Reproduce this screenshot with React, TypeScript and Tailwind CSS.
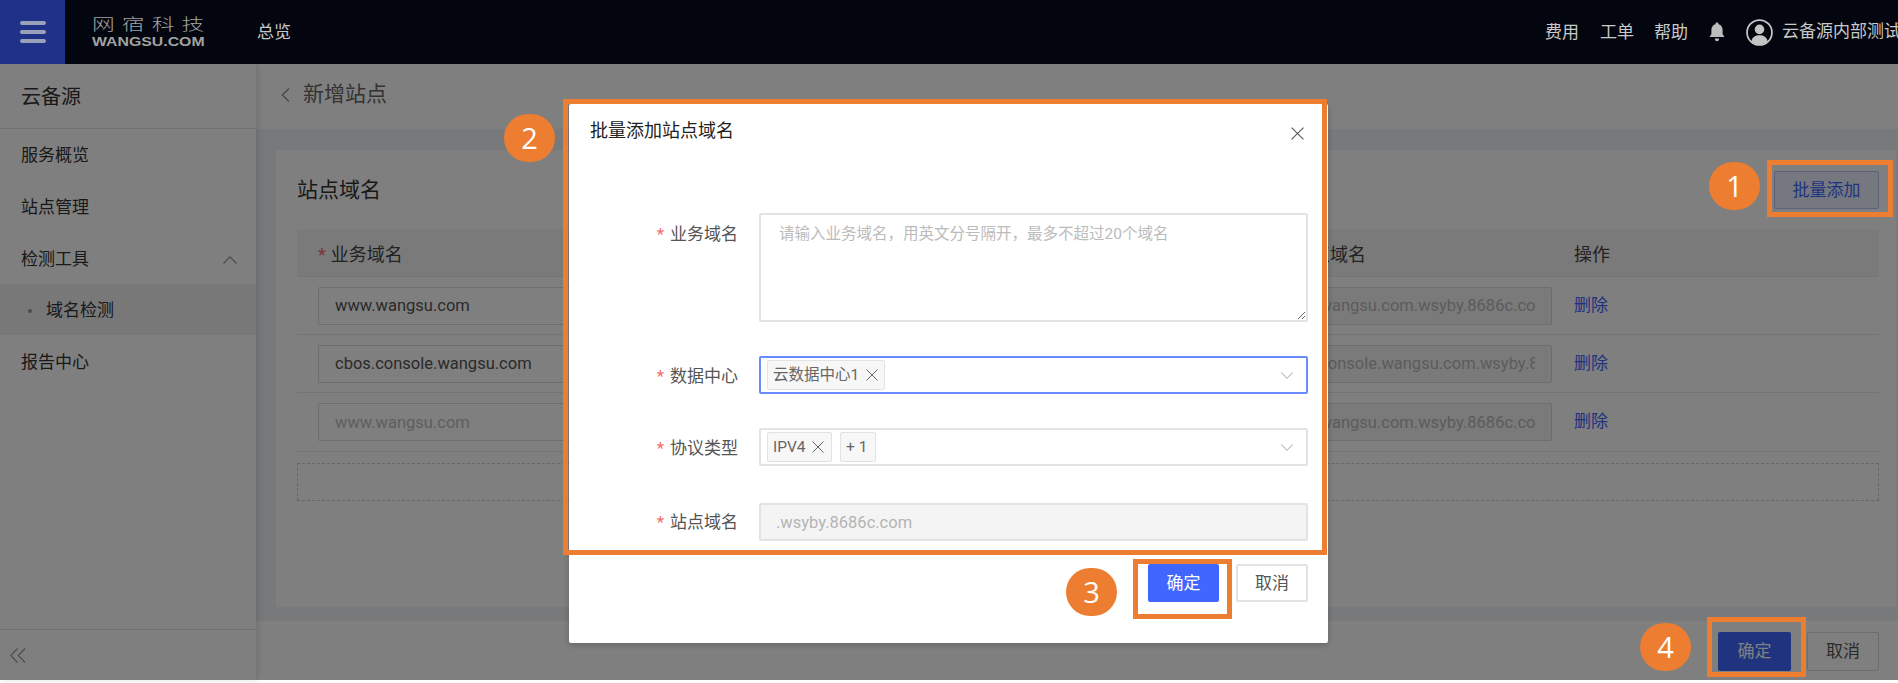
import React from "react";

const cjk = { fontFamily: 'Roboto, "Noto Sans CJK SC", sans-serif' };

function Chevron({ className }: { className: string }) {
  return (
    <svg viewBox="0 0 14 8" className={className} fill="none" stroke="currentColor" strokeWidth="1.2">
      <path d="M0.5 0.5 L7 7.2 L13.5 0.5" />
    </svg>
  );
}

function CloseX({ className }: { className: string }) {
  return (
    <svg viewBox="0 0 12 12" className={className} fill="none" stroke="currentColor" strokeWidth="1">
      <path d="M0.5 0.5 L11.5 11.5 M11.5 0.5 L0.5 11.5" />
    </svg>
  );
}

function Badge({ n, className }: { n: string; className: string }) {
  return (
    <div
      className={`absolute z-30 flex h-[48px] w-[51px] items-center justify-center rounded-full bg-[#ed7d31] text-[29px] text-white ${className}`}
      style={{ fontFamily: '"Open Sans", sans-serif' }}
    >
      {n}
    </div>
  );
}

function Frame({ className }: { className: string }) {
  return <div className={`pointer-events-none absolute z-30 border-[5px] border-[#ed7d31] ${className}`} />;
}

function Row({ value, site, placeholder, last }: { value: string; site: string; placeholder?: boolean; last?: boolean }) {
  const input =
    "h-[38px] w-full rounded-[2px] border border-[#d9d9d9] px-[16px] text-[16.5px] outline-none";
  return (
    <div className={`grid grid-cols-[472px_472px_312px_1fr] items-center border-b border-[#e8e8e8] ${last ? "h-[59px]" : "h-[58px]"}`}>
      <div className="pl-[21px]">
        <input readOnly value={value} className={`${input} ${placeholder ? "text-[#bdbdbd]" : "text-[#555]"}`} style={cjk} />
      </div>
      <div />
      <div className="pl-[21px] pr-[1px]">
        <input readOnly value={site} className={`${input} bg-[#f5f5f5] text-[#b8b8b8]`} style={cjk} />
      </div>
      <div className="pl-[21px] text-[17px] text-[#4066ff]">删除</div>
    </div>
  );
}

function FormRow({ label, children, top, shift }: { label: string; children: React.ReactNode; top?: boolean; shift?: string }) {
  return (
    <div className={`flex ${top ? "items-start" : "items-center"}`}>
      <div className={`flex w-[190px] justify-end pr-[21px] text-[17px] text-[#555] ${top ? "pt-[9px]" : shift ?? ""}`}>
        <span className="mr-[6px] text-[#f56c6c]">*</span>
        {label}
      </div>
      {children}
    </div>
  );
}

function Tag({ children, className }: { children: React.ReactNode; className: string }) {
  return (
    <div className={`flex h-[30px] items-center rounded-[2px] border border-[#e3e3e3] bg-[#f7f7f7] pl-[5px] pt-[2px] text-[15.5px] text-[#666] ${className}`}>
      {children}
    </div>
  );
}

export default function App() {
  return (
    <div className="relative h-[683px] w-[1898px] overflow-hidden bg-white" style={cjk}>
      {/* top bar */}
      <header className="relative z-20 flex h-[64px] items-center bg-[#03060f] text-[17px] text-[#c9c9c9]">
        <div className="flex h-full w-[65px] shrink-0 flex-col items-center justify-center gap-[5px] bg-[#20318a]">
          <span className="h-[4px] w-[26px] rounded-full bg-[#9aa0b8]" />
          <span className="h-[4px] w-[26px] rounded-full bg-[#9aa0b8]" />
          <span className="h-[4px] w-[26px] rounded-full bg-[#9aa0b8]" />
        </div>
        <div className="ml-[27px] flex w-[115px] shrink-0 flex-col items-start text-[#a2a2a2]">
          <span className="origin-left scale-x-[1.42] whitespace-nowrap text-[16px] font-light leading-[18px] tracking-[5px]">网宿科技</span>
          <span className="mt-[2px] origin-left scale-x-[1.32] whitespace-nowrap text-[12px] font-bold leading-[12px]" style={{ fontFamily: '"Liberation Sans", sans-serif' }}>
            WANGSU.COM
          </span>
        </div>
        <span className="ml-[50px] pt-[1px]">总览</span>
        <div className="ml-auto flex shrink-0 items-center">
          <span className="pt-[1px]">费用</span>
          <span className="ml-[21px] pt-[1px]">工单</span>
          <span className="ml-[20px] pt-[1px]">帮助</span>
          <svg viewBox="0 0 16 20" className="ml-[21px] h-[20px] w-[16px]" fill="#bdbdbd">
            <path d="M8 0.5 C9 0.5 9.6 1.2 9.6 2.2 C12.4 3 13.6 5.2 13.6 8 L13.6 12 L15.4 15 L0.6 15 L2.4 12 L2.4 8 C2.4 5.2 3.6 3 6.4 2.2 C6.4 1.2 7 0.5 8 0.5 Z M5.8 16.4 L10.2 16.4 C10.2 18 9.2 19.2 8 19.2 C6.8 19.2 5.8 18 5.8 16.4 Z" />
          </svg>
          <svg viewBox="0 0 26 26" className="ml-[21px] h-[27px] w-[27px]" fill="none">
            <circle cx="13" cy="13" r="12" stroke="#c4c4c4" strokeWidth="1.7" />
            <circle cx="13" cy="10" r="4.6" fill="#c4c4c4" />
            <path d="M5.2 21.4 C6 17.2 9 15.6 13 15.6 C17 15.6 20 17.2 20.8 21.4 C18.8 23.6 16 24.6 13 24.6 C10 24.6 7.2 23.6 5.2 21.4 Z" fill="#c4c4c4" />
          </svg>
          <span className="ml-[9px] w-[116px] overflow-hidden whitespace-nowrap">云备源内部测试</span>
        </div>
      </header>

      <div className="flex h-[616px]">
        {/* sidebar */}
        <aside className="relative z-10 flex w-[256px] shrink-0 flex-col bg-white text-[17px] text-[#333] shadow-[2px_0_6px_rgba(0,0,0,0.12)]">
          <div className="flex h-[65px] items-center border-b border-[#e3e3e3] pl-[21px] pt-[2px] text-[20px]">云备源</div>
          <div className="flex h-[51px] items-center pl-[21px] pt-[3px]">服务概览</div>
          <div className="flex h-[52px] items-center pl-[21px] pt-[3px]">站点管理</div>
          <div className="flex h-[52px] items-center justify-between pl-[21px] pr-[19px] pt-[3px]">
            检测工具
            <Chevron className="h-[8px] w-[14px] rotate-180 text-[#999]" />
          </div>
          <div className="flex h-[51px] items-center bg-[#f1f1f1] pl-[28px] pt-[3px]">
            <span className="mr-[14px] h-[4px] w-[4px] rounded-full bg-[#999]" />
            域名检测
          </div>
          <div className="flex h-[52px] items-center pl-[21px] pt-[3px]">报告中心</div>
          <div className="mt-auto flex h-[51px] items-center border-t border-[#e3e3e3] pl-[10px]">
            <svg viewBox="0 0 16 15" className="h-[15px] w-[16px] text-[#999]" fill="none" stroke="currentColor" strokeWidth="1.2">
              <path d="M7.5 0.5 L0.8 7.5 L7.5 14.5 M15 0.5 L8.3 7.5 L15 14.5" />
            </svg>
          </div>
        </aside>

        {/* main column */}
        <main className="flex min-w-0 flex-1 flex-col bg-[#f0f2f5]">
          <div className="flex h-[65px] shrink-0 items-center bg-white pb-[3px] pl-[22px] text-[21px] text-[#666]">
            <Chevron className="mr-[10px] h-[8px] w-[15px] rotate-90 text-[#888]" />
            新增站点
          </div>
          <section className="ml-[20px] mr-[2px] mt-[21px] flex h-[457px] flex-col bg-white pl-[21px] pr-[17px] pt-[21px]">
            <div className="flex h-[38px] items-center justify-between">
              <h2 className="pt-[1px] text-[21px] text-[#333]">站点域名</h2>
              <button className="h-[38px] w-[105px] rounded-[2px] border border-[#b3c2ff] bg-[#ecf1ff] pt-[1px] text-[17px] text-[#4066ff]">批量添加</button>
            </div>
            <div className="mt-[21px] grid h-[47px] grid-cols-[472px_472px_312px_1fr] items-center border-b border-[#e8e8e8] bg-[#f5f5f5] pt-[2px] text-[18px] text-[#444]">
              <div className="pl-[21px]">
                <span className="mr-[5px] text-[#f56c6c]">*</span>业务域名
              </div>
              <div />
              <div className="pl-[53px]">站点域名</div>
              <div className="pl-[21px]">操作</div>
            </div>
            <Row value="www.wangsu.com" site="www.wangsu.com.wsyby.8686c.com" />
            <Row value="cbos.console.wangsu.com" site="cbos.console.wangsu.com.wsyby.8686c.com" />
            <Row value="www.wangsu.com" site="www.wangsu.com.wsyby.8686c.com" placeholder last />
            <div className="mt-[11px] h-[38px] shrink-0 border border-dashed border-[#cfcfcf]" />
          </section>
          <div className="mt-[14px] flex h-[59px] shrink-0 items-start justify-end gap-[16px] bg-white pr-[19px] pt-[11px] text-[17px]">
            <button className="h-[39px] w-[73px] rounded-[2px] bg-[#4066ff] text-white">确定</button>
            <button className="h-[39px] w-[72px] rounded-[2px] border border-[#d9d9d9] text-[#555]">取消</button>
          </div>
        </main>
      </div>

      {/* mask */}
      <div className="absolute inset-x-0 bottom-[3px] top-[64px] z-10 bg-black/50" />

      {/* dialog */}
      <div className="absolute left-[569px] top-[104px] z-20 flex h-[539px] w-[759px] flex-col rounded-[2px] bg-white pr-[20px] shadow-[0_2px_6px_rgba(0,0,0,0.2)]">
        <div className="flex h-[109px] shrink-0 items-start justify-between pl-[21px] pt-[13px] text-[18px] text-[#222]">
          批量添加站点域名
          <CloseX className="mr-[4px] mt-[10px] h-[13px] w-[13px] text-[#555]" />
        </div>
        <FormRow label="业务域名" top>
          <textarea
            className="h-[109px] flex-1 rounded-[2px] border-2 border-[#e3e3e3] px-[18px] py-[8px] text-[15.5px] outline-none placeholder:text-[#bbb]"
            placeholder="请输入业务域名，用英文分号隔开，最多不超过20个域名"
          />
        </FormRow>
        <div className="mt-[34px]">
          <FormRow label="数据中心" shift="pt-[4px]">
            <div className="flex h-[38px] flex-1 items-center justify-between rounded-[2px] border-2 border-[#6a8bff] pl-[6px] pr-[12px]">
              <Tag className="w-[118px]">
                云数据中心1
                <CloseX className="mb-[3px] ml-[7px] h-[12px] w-[12px] text-[#666]" />
              </Tag>
              <Chevron className="h-[7px] w-[14px] text-[#bbb]" />
            </div>
          </FormRow>
        </div>
        <div className="mt-[34px]">
          <FormRow label="协议类型" shift="pt-[4px]">
            <div className="flex h-[38px] flex-1 items-center rounded-[2px] border-2 border-[#e3e3e3] pl-[6px] pr-[12px]">
              <Tag className="w-[65px]">
                IPV4
                <CloseX className="mb-[3px] ml-[6px] h-[12px] w-[12px] text-[#666]" />
              </Tag>
              <Tag className="ml-[8px] w-[36px]">+ 1</Tag>
              <Chevron className="ml-auto h-[7px] w-[14px] text-[#bbb]" />
            </div>
          </FormRow>
        </div>
        <div className="mt-[37px]">
          <FormRow label="站点域名" shift="pt-[2px]">
            <input
              readOnly
              value=".wsyby.8686c.com"
              className="h-[38px] flex-1 rounded-[2px] border-2 border-[#e3e3e3] bg-[#f4f4f4] px-[15px] text-[16.5px] text-[#b4b4b4] outline-none"
              style={cjk}
            />
          </FormRow>
        </div>
        <div className="mt-[23px] flex justify-end gap-[17px] text-[17px]">
          <button className="h-[38px] w-[71px] rounded-[2px] bg-[#4066ff] pt-[2px] text-white">确定</button>
          <button className="h-[38px] w-[72px] rounded-[2px] border-2 border-[#e3e3e3] pt-[2px] text-[#555]">取消</button>
        </div>
      </div>

      {/* annotations */}
      <Frame className="left-[1767px] top-[160px] h-[57px] w-[126px]" />
      <Frame className="left-[563px] top-[99px] h-[456px] w-[764px]" />
      <Frame className="left-[1133px] top-[559px] h-[60px] w-[99px]" />
      <Frame className="left-[1707px] top-[617px] h-[60px] w-[99px]" />
      <Badge n="1" className="left-[1709px] top-[162px]" />
      <Badge n="2" className="left-[504px] top-[114px]" />
      <Badge n="3" className="left-[1066px] top-[568px]" />
      <Badge n="4" className="left-[1640px] top-[623px]" />
    </div>
  );
}
